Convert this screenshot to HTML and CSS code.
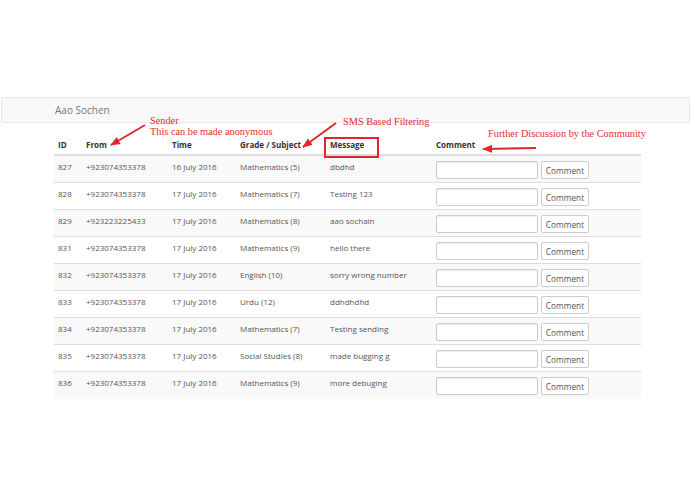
FILE: index.html
```html
<!DOCTYPE html>
<html>
<head>
<meta charset="utf-8">
<link rel="stylesheet" href="styles.css">
</head>
<body>
<div class="page">
  <nav class="navbar"><span class="brand">Aao Sochen</span></nav>
  <div class="container">
    <table class="tbl">
      <thead>
        <tr><th class="c-id">ID</th><th class="c-from">From</th><th class="c-time">Time</th><th class="c-grade">Grade / Subject</th><th class="c-msg">Message</th><th class="c-com">Comment</th></tr>
      </thead>
      <tbody>
        <tr><td>827</td><td>+923074353378</td><td>16 July 2016</td><td>Mathematics (5)</td><td>dbdhd</td><td><div class="cf"><input class="inp" type="text"><button class="btn">Comment</button></div></td></tr>
        <tr><td>828</td><td>+923074353378</td><td>17 July 2016</td><td>Mathematics (7)</td><td>Testing 123</td><td><div class="cf"><input class="inp" type="text"><button class="btn">Comment</button></div></td></tr>
        <tr><td>829</td><td>+923223225433</td><td>17 July 2016</td><td>Mathematics (8)</td><td>aao sochain</td><td><div class="cf"><input class="inp" type="text"><button class="btn">Comment</button></div></td></tr>
        <tr><td>831</td><td>+923074353378</td><td>17 July 2016</td><td>Mathematics (9)</td><td>hello there</td><td><div class="cf"><input class="inp" type="text"><button class="btn">Comment</button></div></td></tr>
        <tr><td>832</td><td>+923074353378</td><td>17 July 2016</td><td>English (10)</td><td>sorry wrong number</td><td><div class="cf"><input class="inp" type="text"><button class="btn">Comment</button></div></td></tr>
        <tr><td>833</td><td>+923074353378</td><td>17 July 2016</td><td>Urdu (12)</td><td>ddhdhdhd</td><td><div class="cf"><input class="inp" type="text"><button class="btn">Comment</button></div></td></tr>
        <tr><td>834</td><td>+923074353378</td><td>17 July 2016</td><td>Mathematics (7)</td><td>Testing sending</td><td><div class="cf"><input class="inp" type="text"><button class="btn">Comment</button></div></td></tr>
        <tr><td>835</td><td>+923074353378</td><td>17 July 2016</td><td>Social Studies (8)</td><td>made bugging g</td><td><div class="cf"><input class="inp" type="text"><button class="btn">Comment</button></div></td></tr>
        <tr><td>836</td><td>+923074353378</td><td>17 July 2016</td><td>Mathematics (9)</td><td>more debuging</td><td><div class="cf"><input class="inp" type="text"><button class="btn">Comment</button></div></td></tr>
      </tbody>
    </table>
  </div>

  <svg class="marks" width="695" height="494" viewBox="0 0 695 494">
    <defs>
      <marker id="ah" markerWidth="10" markerHeight="8" refX="9" refY="4" orient="auto" markerUnits="userSpaceOnUse">
        <path d="M0,0 L10,4 L0,8 Z" fill="#e3262b"/>
      </marker>
    </defs>
    <line x1="145" y1="125" x2="111" y2="145" stroke="#e3262b" stroke-width="2" marker-end="url(#ah)"/>
    <line x1="336" y1="123" x2="303" y2="147" stroke="#e3262b" stroke-width="2" marker-end="url(#ah)"/>
    <line x1="536" y1="148" x2="483" y2="149" stroke="#e3262b" stroke-width="2" marker-end="url(#ah)"/>
    <rect x="325" y="138" width="53" height="19" fill="none" stroke="#e3262b" stroke-width="2"/>
  </svg>
  <div class="note n-sender">Sender<br>This can be made anonymous</div>
  <div class="note n-sms">SMS Based Filtering</div>
  <div class="note n-further">Further Discussion by the Community</div>
</div>
</body>
</html>
```
FILE: styles.css
```css
* { box-sizing: border-box; }
html, body { margin: 0; padding: 0; background: #fff; }
.page {
  position: relative;
  width: 695px;
  height: 494px;
  padding-top: 97px;
  font-family: "Open Sans", "Noto Sans", sans-serif;
  color: #444;
  overflow: hidden;
}
.navbar {
  height: 26px;
  margin: 0 5px 0 1px;
  background: #f8f8f8;
  border: 1px solid #e7e7e7;
  border-radius: 2px;
  padding-left: 53px;
  display: flex;
  align-items: center;
}
.brand { font-size: 10px; color: #777; }
.container { padding-left: 54px; margin-top: 10px; }
.tbl {
  width: 587px;
  border-collapse: collapse;
  font-size: 8px;
  line-height: 11px;
}
.tbl th {
  text-align: left;
  font-weight: 700;
  color: #333;
  padding: 5px 4px 4px;
  vertical-align: bottom;
  border-bottom: 2px solid #ddd;
  height: 22px;
}
.tbl td {
  padding: 5px 4px 3px;
  vertical-align: top;
  border-top: 1px solid #ddd;
  height: 27px;
  color: #555;
}
.tbl tbody tr:nth-child(odd) { background: #f9f9f9; }
.tbl tbody tr:first-child td { border-top: none; }
.c-id { width: 28px; }
.c-from { width: 86px; }
.c-time { width: 68px; }
.c-grade { width: 90px; }
.c-msg { width: 106px; }
.cf { display: flex; gap: 3px; }
.inp {
  width: 102px;
  height: 18px;
  border: 1px solid #ccc;
  border-radius: 2px;
  background: #fff;
  box-shadow: inset 0 1px 1px rgba(0,0,0,0.075);
  padding: 0;
  margin: 0;
}
.btn {
  width: 48px;
  height: 18px;
  border: 1px solid #ccc;
  border-radius: 2px;
  background: #fff;
  color: #555;
  font-family: "Open Sans", "Noto Sans", sans-serif;
  font-size: 8.3px;
  padding: 0;
  margin: 0;
}
.marks { position: absolute; left: 0; top: 0; pointer-events: none; }
.note {
  position: absolute;
  font-family: "Liberation Serif", serif;
  color: #e52b2f;
  font-size: 10.3px;
  line-height: 11px;
  white-space: nowrap;
}
.n-sender { left: 150px; top: 115px; }
.n-sms { left: 343px; top: 116px; }
.n-further { left: 488px; top: 128px; }
```
